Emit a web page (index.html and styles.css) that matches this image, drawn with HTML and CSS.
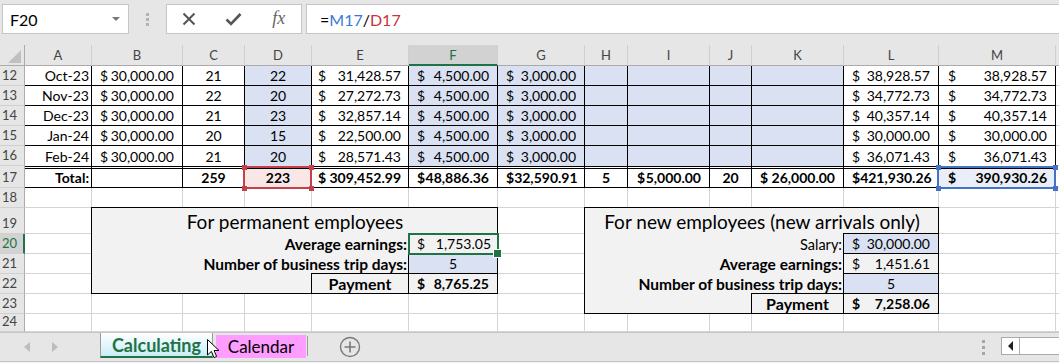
FILE: index.html
```html
<!DOCTYPE html>
<html lang="en">
<head>
    <meta charset="UTF-8">
    <title>Business trip calculation</title>
    <link rel="stylesheet" href="styles.css">
</head>
<body>
    <div class="formula-bar">
        <div class="name-box">F20<span class="caret"></span></div>
        <div class="grip"></div>
        <div class="fx-buttons">
            <svg width="14" height="14" viewBox="0 0 14 14"><path d="M1.5 1.5 L12.5 12.5 M12.5 1.5 L1.5 12.5" stroke="#555" stroke-width="2" fill="none"/></svg>
            <svg width="17" height="14" viewBox="0 0 17 14"><path d="M1.5 7.5 L6 12 L15.5 2" stroke="#555" stroke-width="2.6" fill="none"/></svg>
            <span class="fx">fx</span>
        </div>
        <div class="formula">=<span class="ref-m">M17</span>/<span class="ref-d">D17</span></div>
    </div>

    <div class="sheet">
        <!-- column headers -->
        <div class="c corner"><i class="tri"></i></div>
        <div class="c hd">A</div>
        <div class="c hd">B</div>
        <div class="c hd">C</div>
        <div class="c hd">D</div>
        <div class="c hd">E</div>
        <div class="c hd sel">F</div>
        <div class="c hd">G</div>
        <div class="c hd">H</div>
        <div class="c hd">I</div>
        <div class="c hd">J</div>
        <div class="c hd">K</div>
        <div class="c hd">L</div>
        <div class="c hd">M</div>
        <div class="c hd"></div>

        <!-- row 12 -->
        <div class="c rh">12</div>
        <div class="c t r">Oct-23</div>
        <div class="c t acc"><span>$</span><span>30,000.00</span></div>
        <div class="c t m">21</div>
        <div class="c t m blue">22</div>
        <div class="c t acc col-e"><span>$</span><span>31,428.57</span></div>
        <div class="c t acc blue"><span>$</span><span>4,500.00</span></div>
        <div class="c t acc blue"><span>$</span><span>3,000.00</span></div>
        <div class="c t blue"></div>
        <div class="c t blue"></div>
        <div class="c t blue"></div>
        <div class="c t blue"></div>
        <div class="c t acc"><span>$</span><span>38,928.57</span></div>
        <div class="c t acc col-m"><span>$</span><span>38,928.57</span></div>
        <div class="c"></div>

        <!-- row 13 -->
        <div class="c rh">13</div>
        <div class="c t r">Nov-23</div>
        <div class="c t acc"><span>$</span><span>30,000.00</span></div>
        <div class="c t m">22</div>
        <div class="c t m blue">20</div>
        <div class="c t acc col-e"><span>$</span><span>27,272.73</span></div>
        <div class="c t acc blue"><span>$</span><span>4,500.00</span></div>
        <div class="c t acc blue"><span>$</span><span>3,000.00</span></div>
        <div class="c t blue"></div>
        <div class="c t blue"></div>
        <div class="c t blue"></div>
        <div class="c t blue"></div>
        <div class="c t acc"><span>$</span><span>34,772.73</span></div>
        <div class="c t acc col-m"><span>$</span><span>34,772.73</span></div>
        <div class="c"></div>

        <!-- row 14 -->
        <div class="c rh">14</div>
        <div class="c t r">Dec-23</div>
        <div class="c t acc"><span>$</span><span>30,000.00</span></div>
        <div class="c t m">21</div>
        <div class="c t m blue">23</div>
        <div class="c t acc col-e"><span>$</span><span>32,857.14</span></div>
        <div class="c t acc blue"><span>$</span><span>4,500.00</span></div>
        <div class="c t acc blue"><span>$</span><span>3,000.00</span></div>
        <div class="c t blue"></div>
        <div class="c t blue"></div>
        <div class="c t blue"></div>
        <div class="c t blue"></div>
        <div class="c t acc"><span>$</span><span>40,357.14</span></div>
        <div class="c t acc col-m"><span>$</span><span>40,357.14</span></div>
        <div class="c"></div>

        <!-- row 15 -->
        <div class="c rh">15</div>
        <div class="c t r">Jan-24</div>
        <div class="c t acc"><span>$</span><span>30,000.00</span></div>
        <div class="c t m">20</div>
        <div class="c t m blue">15</div>
        <div class="c t acc col-e"><span>$</span><span>22,500.00</span></div>
        <div class="c t acc blue"><span>$</span><span>4,500.00</span></div>
        <div class="c t acc blue"><span>$</span><span>3,000.00</span></div>
        <div class="c t blue"></div>
        <div class="c t blue"></div>
        <div class="c t blue"></div>
        <div class="c t blue"></div>
        <div class="c t acc"><span>$</span><span>30,000.00</span></div>
        <div class="c t acc col-m"><span>$</span><span>30,000.00</span></div>
        <div class="c"></div>

        <!-- row 16 -->
        <div class="c rh">16</div>
        <div class="c t nb r">Feb-24</div>
        <div class="c t nb acc"><span>$</span><span>30,000.00</span></div>
        <div class="c t nb m">21</div>
        <div class="c t nb m blue">20</div>
        <div class="c t nb acc col-e"><span>$</span><span>28,571.43</span></div>
        <div class="c t nb acc blue"><span>$</span><span>4,500.00</span></div>
        <div class="c t nb acc blue"><span>$</span><span>3,000.00</span></div>
        <div class="c t nb blue"></div>
        <div class="c t nb blue"></div>
        <div class="c t nb blue"></div>
        <div class="c t nb blue"></div>
        <div class="c t nb acc"><span>$</span><span>36,071.43</span></div>
        <div class="c t nb acc col-m"><span>$</span><span>36,071.43</span></div>
        <div class="c"></div>

        <!-- row 17: totals -->
        <div class="c rh">17</div>
        <div class="c t tot r">Total:</div>
        <div class="c t tot"></div>
        <div class="c t tot m">259</div>
        <div class="c t tot m ref ref-red">223</div>
        <div class="c t tot acc col-e"><span>$</span><span>309,452.99</span></div>
        <div class="c t tot acc"><span>$</span><span>48,886.36</span></div>
        <div class="c t tot acc"><span>$</span><span>32,590.91</span></div>
        <div class="c t tot m">5</div>
        <div class="c t tot acc col-i"><span>$</span><span>5,000.00</span></div>
        <div class="c t tot m">20</div>
        <div class="c t tot acc"><span>$</span><span>26,000.00</span></div>
        <div class="c t tot acc"><span>$</span><span>421,930.26</span></div>
        <div class="c t tot acc col-m ref ref-blue"><span>$</span><span>390,930.26</span></div>
        <div class="c"></div>

        <!-- row 18 -->
        <div class="c rh">18</div>
        <div class="c"></div><div class="c"></div><div class="c"></div><div class="c"></div>
        <div class="c"></div><div class="c"></div><div class="c"></div><div class="c"></div>
        <div class="c"></div><div class="c"></div><div class="c"></div><div class="c"></div>
        <div class="c"></div><div class="c"></div>

        <!-- rows 19-22: free cells around the two boxes -->
        <div class="c rh">19</div><div class="c"></div><div class="c"></div><div class="c"></div><div class="c"></div>
        <div class="c rh sel">20</div><div class="c"></div><div class="c"></div><div class="c"></div><div class="c"></div>
        <div class="c rh">21</div><div class="c"></div><div class="c"></div><div class="c"></div><div class="c"></div>
        <div class="c rh">22</div><div class="c"></div><div class="c"></div><div class="c"></div><div class="c"></div>

        <!-- row 23 -->
        <div class="c rh">23</div>
        <div class="c"></div><div class="c"></div><div class="c"></div><div class="c"></div>
        <div class="c"></div><div class="c"></div><div class="c"></div>
        <div class="c"></div><div class="c"></div>

        <!-- row 24 -->
        <div class="c rh">24</div>
        <div class="c"></div><div class="c"></div><div class="c"></div><div class="c"></div>
        <div class="c"></div><div class="c"></div><div class="c"></div><div class="c"></div>
        <div class="c"></div><div class="c"></div><div class="c"></div><div class="c"></div>
        <div class="c"></div><div class="c"></div>

        <!-- box: permanent employees (B19:F22) -->
        <div class="box box-perm"></div>
        <div class="box-title perm-title">For permanent employees</div>
        <div class="lbl b perm-avg-l">Average earnings:</div>
        <div class="val acc active perm-avg">
            <span>$</span><span>1,753.05</span>
        </div>
        <div class="lbl b perm-days-l">Number of business trip days:</div>
        <div class="val bx blue m perm-days">5</div>
        <div class="val bx b m pay perm-pay-l">Payment</div>
        <div class="val bx b acc perm-pay"><span>$</span><span>8,765.25</span></div>

        <!-- box: new employees (H19:L23) -->
        <div class="box box-new"></div>
        <div class="box-title new-title">For new employees (new arrivals only)</div>
        <div class="lbl new-sal-l">Salary:</div>
        <div class="val bx blue acc new-sal"><span>$</span><span>30,000.00</span></div>
        <div class="lbl b new-avg-l">Average earnings:</div>
        <div class="val bx acc new-avg"><span>$</span><span>1,451.61</span></div>
        <div class="lbl b new-days-l">Number of business trip days:</div>
        <div class="val bx blue m new-days">5</div>
        <div class="val bx b m pay new-pay-l">Payment</div>
        <div class="val bx b acc new-pay"><span>$</span><span>7,258.06</span></div>
    </div>

    <div class="tabs">
        <div class="tab-nav"><i class="arr-l"></i><i class="arr-r"></i></div>
        <div class="tab active-tab">Calculating</div>
        <div class="tab pink-tab">Calendar</div>
        <div class="tab-sep"></div>
        <div class="add-sheet">
            <svg width="22" height="22" viewBox="0 0 22 22"><circle cx="11" cy="11" r="9.5" stroke="#7a7a7a" stroke-width="1.4" fill="none"/><path d="M11 5.5 V16.5 M5.5 11 H16.5" stroke="#7a7a7a" stroke-width="1.6"/></svg>
        </div>
        <div class="tab-grip"></div>
        <div class="hscroll"><span class="hscroll-btn"><i class="arr-black"></i></span></div>
        <svg class="cursor" width="13" height="20" viewBox="0 0 13 20"><path d="M0.5 0.5 V16 L4.4 12.4 L7 18.6 L9.6 17.5 L7.1 11.5 H12 Z" fill="#fff" stroke="#000" stroke-width="1"/></svg>
    </div>
</body>
</html>
```

FILE: styles.css
```css
* {
    box-sizing: border-box;
}
body {
    margin: 0;
    width: 1059px;
    height: 363px;
    overflow: hidden;
    background-color: #f0f0f0;
    font-family: Lato, "Liberation Sans", sans-serif;
    color: #000;
}

/* formula bar */
.formula-bar {
    height: 45px;
    background-color: #e6e6e6;
    display: flex;
    align-items: flex-start;
    padding: 4px 0 0 2px;
}
.name-box {
    width: 127px;
    height: 30px;
    background-color: #fff;
    border: 1px solid #c6c6c6;
    display: flex;
    align-items: center;
    padding-left: 7px;
    font-size: 16px;
}
.caret {
    margin-left: auto;
    margin-right: 8px;
    border-left: 4px solid transparent;
    border-right: 4px solid transparent;
    border-top: 4px solid #777;
}
.grip {
    width: 3px;
    height: 13px;
    margin: 9px 0 0 17px;
    background: repeating-linear-gradient(#b3b3b3 0 3px, transparent 3px 5px);
}
.fx-buttons {
    width: 136px;
    height: 30px;
    margin-left: 17px;
    background-color: #fff;
    border: 1px solid #c6c6c6;
    display: grid;
    grid-template-columns: repeat(3, 1fr);
    align-items: center;
    justify-items: center;
}
.fx {
    font-family: "Liberation Serif", serif;
    font-style: italic;
    font-size: 18px;
    color: #666;
    margin-top: -2px;
}
.formula {
    flex: 1;
    height: 30px;
    margin-left: 4px;
    background-color: #fff;
    border: 1px solid #c6c6c6;
    border-right: none;
    display: flex;
    align-items: center;
    padding-left: 13px;
    font-size: 16px;
}
.ref-m {
    color: #3a78d6;
}
.ref-d {
    color: #c8323a;
}

/* sheet grid */
.sheet {
    display: grid;
    grid-template-columns: 25px 67px 91px 62px 67px 97px 89px 87px 43px 82px 42px 92px 95px 117px 1fr;
    grid-template-rows: 21px repeat(5, 20px) 22px 20px 26px repeat(4, 20px) 18px;
    height: 287px;
    overflow: hidden;
    background-color: #fff;
    font-size: 14px;
    line-height: 17px;
}
.c {
    border-right: 1px solid #d4d4d4;
    border-bottom: 1px solid #d4d4d4;
    background-color: #fff;
    display: flex;
    align-items: flex-end;
    padding: 0 3px 1px;
    white-space: nowrap;
}
.hd {
    background-color: #e6e6e6;
    border-right-color: #cfcfcf;
    border-bottom-color: #ababab;
    justify-content: center;
    align-items: center;
    color: #444;
    font-size: 13px;
    padding: 1px 0 0;
}
.hd.sel {
    background-color: #d2d2d2;
    border-bottom: 2px solid #217346;
    color: #217346;
}
.corner {
    background-color: #e6e6e6;
    border-right-color: #ababab;
    border-bottom-color: #ababab;
    justify-content: flex-end;
    padding: 0 3px 2px 0;
}
.tri {
    width: 13px;
    height: 13px;
    background-color: #c0c0c0;
    clip-path: polygon(100% 0, 100% 100%, 0 100%);
}
.rh {
    background-color: #e6e6e6;
    border-right-color: #ababab;
    border-bottom-color: #d0d0d0;
    color: #444;
    font-size: 13px;
    padding-left: 2px;
}
.rh.sel {
    background-color: #d2d2d2;
    border-right: 2px solid #217346;
    color: #217346;
}

/* data table */
.t {
    border-right-color: #000;
    border-bottom-color: #000;
}
.t.nb {
    border-bottom: none;
}
.t.tot {
    border-top: 3px double #000;
    font-weight: bold;
}
.r {
    justify-content: flex-end;
    padding-right: 2px;
}
.m {
    justify-content: center;
}
.acc {
    justify-content: space-between;
    padding-left: 8px;
    padding-right: 8px;
}
.acc.col-e {
    padding-left: 6px;
    padding-right: 7px;
}
.acc.col-i {
    padding-left: 9px;
}
.acc.col-m {
    padding-left: 9px;
    padding-right: 8px;
}
.blue {
    background-color: #d9e1f2;
}
.b {
    font-weight: bold;
}

/* formula reference highlights */
.ref {
    position: relative;
}
.ref::before,
.ref::after {
    content: '';
    position: absolute;
}
.ref::before {
    left: -2px;
    right: -1px;
    top: -3px;
    bottom: -2px;
    border: 2px solid var(--ref);
}
.ref::after {
    left: -3px;
    right: -3px;
    top: -4px;
    bottom: -4px;
    background:
        linear-gradient(var(--ref), var(--ref)) left top / 5px 5px no-repeat,
        linear-gradient(var(--ref), var(--ref)) right top / 5px 5px no-repeat,
        linear-gradient(var(--ref), var(--ref)) left bottom / 5px 5px no-repeat,
        linear-gradient(var(--ref), var(--ref)) right bottom / 5px 5px no-repeat;
}
.ref-red {
    --ref: #c4404a;
    background-color: #f9e7e7;
}
.ref-blue {
    --ref: #4472c4;
    background-color: #e9eef8;
}

/* summary boxes */
.box {
    margin: -1px 0 0 -1px;
    border: 1px solid #000;
    background-color: #f2f2f2;
}
.box-perm {
    grid-area: 9 / 3 / 13 / 8;
}
.box-new {
    grid-area: 9 / 9 / 14 / 14;
}
.box-title {
    display: flex;
    justify-content: center;
    align-items: flex-end;
    padding-bottom: 1px;
    font-size: 19px;
    line-height: 22px;
    white-space: nowrap;
}
.perm-title {
    grid-area: 9 / 3 / 10 / 8;
}
.new-title {
    grid-area: 9 / 9 / 10 / 14;
}
.lbl {
    display: flex;
    justify-content: flex-end;
    align-items: flex-end;
    padding: 0 2px 1px 0;
    white-space: nowrap;
    font-size: 14.5px;
}
.lbl.b {
    font-size: 15.5px;
}
.val {
    display: flex;
    align-items: flex-end;
    padding-bottom: 1px;
    white-space: nowrap;
}
.val.pay {
    font-size: 16px;
}
.bx {
    margin: -1px 0 0 -1px;
    border: 1px solid #000;
}
.active {
    position: relative;
    margin: -1px -1px -1px -1px;
    border: 2px solid #217346;
    padding: 0 6px 1px 7px;
}
.active::after {
    content: '';
    position: absolute;
    right: -5px;
    bottom: -5px;
    width: 7px;
    height: 7px;
    background-color: #217346;
    border: 1px solid #fff;
}
.perm-avg-l { grid-area: 10 / 3 / 11 / 7; }
.perm-avg { grid-area: 10 / 7 / 11 / 8; }
.perm-days-l { grid-area: 11 / 3 / 12 / 7; }
.perm-days { grid-area: 11 / 7 / 12 / 8; }
.perm-pay-l { grid-area: 12 / 6 / 13 / 7; }
.perm-pay { grid-area: 12 / 7 / 13 / 8; }
.new-sal-l { grid-area: 10 / 9 / 11 / 13; }
.new-sal { grid-area: 10 / 13 / 11 / 14; }
.new-avg-l { grid-area: 11 / 9 / 12 / 13; }
.new-avg { grid-area: 11 / 13 / 12 / 14; }
.new-days-l { grid-area: 12 / 9 / 13 / 13; }
.new-days { grid-area: 12 / 13 / 13 / 14; }
.new-pay-l { grid-area: 13 / 12 / 14 / 13; }
.new-pay { grid-area: 13 / 13 / 14 / 14; }

/* sheet tabs */
.tabs {
    position: relative;
    height: 30px;
    background-color: #e6e6e6;
    border-top: 1px solid #c6c6c6;
    border-bottom: 1px solid #c6c6c6;
    display: flex;
    align-items: flex-start;
}
.tab-nav {
    width: 100px;
    height: 28px;
    display: flex;
    align-items: center;
    padding-left: 24px;
    gap: 22px;
}
.arr-l {
    border-right: 6px solid #bdbdbd;
    border-top: 5px solid transparent;
    border-bottom: 5px solid transparent;
}
.arr-r {
    border-left: 6px solid #bdbdbd;
    border-top: 5px solid transparent;
    border-bottom: 5px solid transparent;
}
.tab {
    display: flex;
    align-items: center;
    justify-content: center;
    white-space: nowrap;
}
.active-tab {
    width: 113px;
    height: 25px;
    background: linear-gradient(#ffffff, #c9ecf8);
    border-left: 1px solid #9c9c9c;
    border-right: 1px solid #9c9c9c;
    border-bottom: 2px solid #217346;
    color: #217346;
    font-weight: bold;
    font-size: 18px;
    padding-top: 1px;
}
.pink-tab {
    width: 90px;
    height: 23px;
    margin: 2px 0 0 3px;
    background-color: #ff9cff;
    font-size: 17px;
}
.tab-sep {
    width: 1px;
    height: 20px;
    margin: 3px 0 0 1px;
    background-color: #9c9c9c;
}
.add-sheet {
    display: flex;
    margin: 3px 0 0 31px;
}
.tab-grip {
    width: 3px;
    height: 15px;
    margin: 7px 0 0 auto;
    background: repeating-linear-gradient(#a6a6a6 0 3px, transparent 3px 6px);
}
.hscroll {
    width: 60px;
    height: 18px;
    margin: 4px -2px 0 16px;
    background-color: #fff;
    border: 1px solid #ababab;
    display: flex;
}
.hscroll-btn {
    width: 18px;
    border-right: 1px solid #ababab;
    display: flex;
    align-items: center;
    justify-content: center;
}
.arr-black {
    border-right: 5px solid #222;
    border-top: 5px solid transparent;
    border-bottom: 5px solid transparent;
}
.cursor {
    position: absolute;
    left: 207px;
    top: 6px;
}
```
